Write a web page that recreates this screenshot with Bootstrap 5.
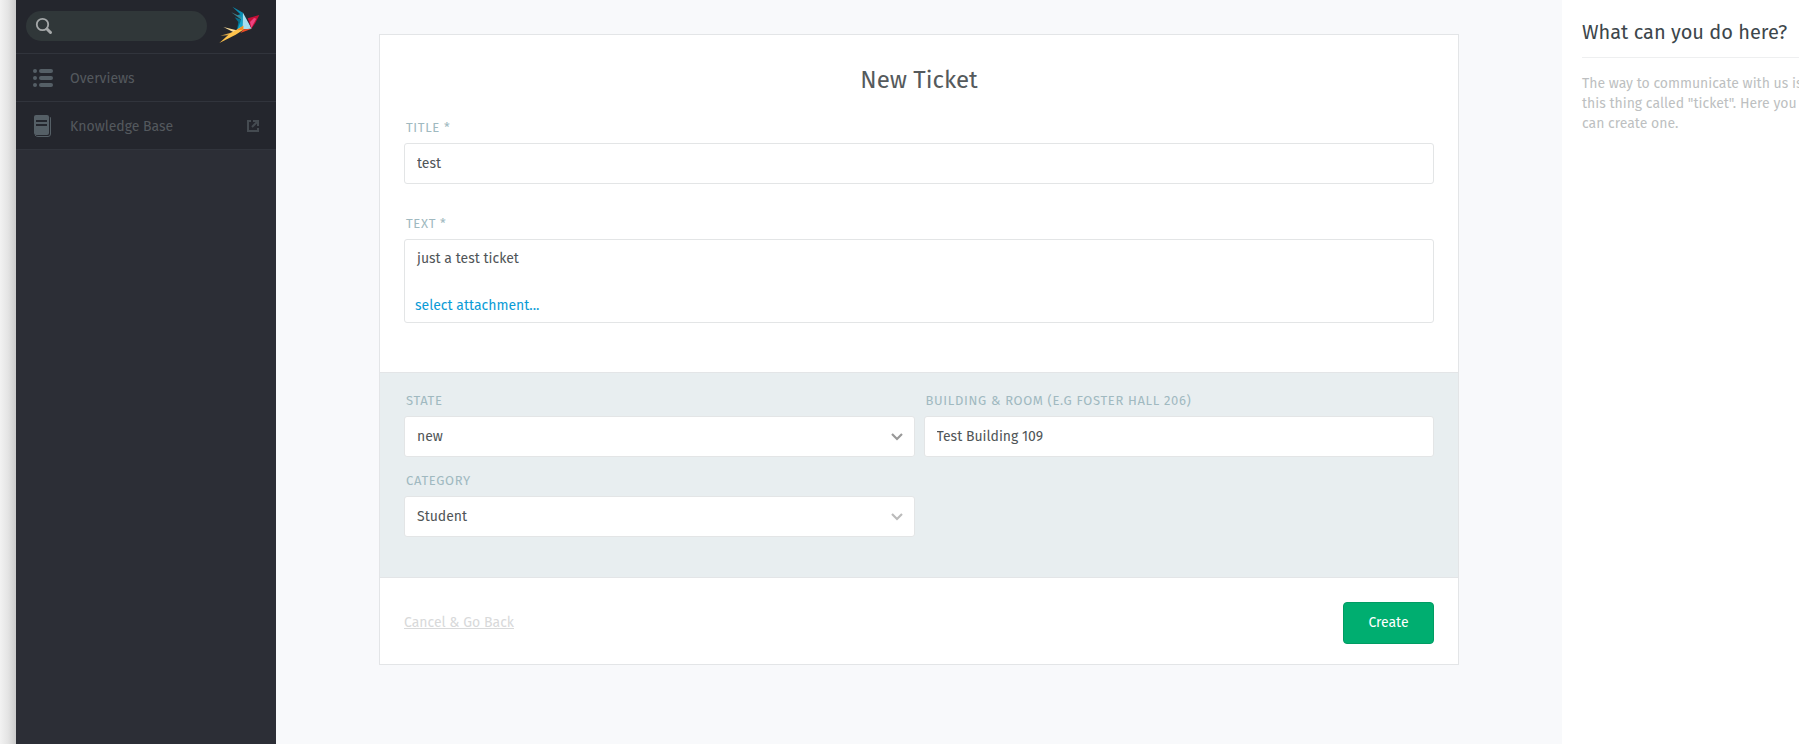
<!DOCTYPE html>
<html lang="en">
<head>
<meta charset="utf-8">
<meta name="viewport" content="width=device-width, initial-scale=1">
<title>New Ticket</title>
<link href="https://cdn.jsdelivr.net/npm/bootstrap@5.3.0/dist/css/bootstrap.min.css" rel="stylesheet">
<style>
body { font-family: "Fira Sans", "Noto Sans", sans-serif; font-size: 14px; line-height: 20px; color: #505557; background: #f8f9fb; }
.window-edge { width: 16px; background: linear-gradient(90deg, #f2f2f2, #e4e4e4 50%, #cbcbcb); }
.side-menu { width: 260px; background: #2c2e36; }
.side-top { background: #24262d; }
.search-row { height: 53px; padding: 0 11px 8px 10px; align-items: flex-end; }
.search-pill { width: 181px; height: 30px; border-radius: 15px; background: #303739; padding: 0 12px 0 9px; }
.search-pill input { background: none; border: 0; outline: 0; color: #ccc; min-width: 0; }
.menu-link { height: 48px; border-top: 1px solid #31343c; padding: 1px 17px 0 16px; color: #54595e; text-decoration: none; }
.menu-link span { padding-top: 2px; }
.menu-link .menu-icon { width: 22px; margin-right: 16px; }
.side-end { border-top: 1px solid #31343c; }
.ticket-wrap { padding: 34px 24px; }
.ticket { max-width: 1080px; border: 1px solid #e3e5e7; background: #fff; }
.ticket h1 { font-size: 24px; line-height: 32px; font-weight: 400; color: #555a5c; }
.ticket-main { padding: 29px 24px 49px; }
.ticket label { display: block; font-size: 13px; line-height: 16px; letter-spacing: .05em; text-transform: uppercase; color: #a0b9c0; margin: 0 0 7px 2px; }
.field { height: 41px; padding: 0 12px; border: 1px solid #e3e5e6; border-radius: 3px; font-size: 14px; line-height: 20px; color: #505557; background-color: #fff; }
.composer { border: 1px solid #e3e5e6; border-radius: 3px; padding: 9px 10px 5px; }
.composer textarea { resize: none; border: 0; outline: 0; height: 46px; padding: 0 2px; color: #505557; }
.attach { border: 0; background: none; color: #0a9bd6; line-height: 22px; }
.ticket-meta { background: #e8eef0; border-top: 1px solid #e3e5e7; border-bottom: 1px solid #e3e5e7; padding: 20px 24px 40px; }
.meta-grid { display: grid; grid-template-columns: 1fr 1fr; gap: 16px 9px; }
.pick select { appearance: none; }
.pick svg { right: 12px; top: 17px; pointer-events: none; }
.ticket-foot { padding: 24px 24px 20px; }
.cancel { color: #d8d9da; }
.btn-create { width: 91px; height: 42px; font-size: 14px; color: #fff; background: #00ae70; border: 1px solid #009c63; border-radius: 4px; }
.help { width: 237px; background: #fff; }
.help-body { width: 280px; padding: 16px 20px; color: #bdbfc1; }
.help h2 { font-size: 20px; line-height: 32px; font-weight: 400; color: #3d464b; padding-bottom: 9px; border-bottom: 1px solid #eeeff0; margin-bottom: 16px; }
</style>
</head>
<body>
<div class="d-flex min-vh-100">
  <div class="window-edge flex-shrink-0"></div>
  <aside class="side-menu flex-shrink-0">
    <div class="side-top">
      <div class="search-row d-flex justify-content-between">
        <div class="search-pill d-flex align-items-center mb-1">
          <svg class="flex-shrink-0" width="18" height="18" viewBox="0 0 18 18" fill="none" stroke="#a5a8a9"><circle cx="7.500" cy="7.500" r="5.700" stroke-width="1.800"/><path d="M12 12l3.500 3.500" stroke-width="3" stroke-linecap="round"/></svg>
          <input type="search" class="flex-grow-1" aria-label="Search">
        </div>
        <svg class="me-1 flex-shrink-0" width="43" height="40" viewBox="655 15 129 120" aria-label="Logo">
          <path fill="#0a8fb5" d="M698 20L730 38 728 62 712 46 722 43z"/>
          <path fill="#3b8794" d="M695 37L727 52 727 61z"/>
          <path fill="#056f8d" d="M705 52L728 60 712 90 716 66z"/>
          <path fill="#13a4c9" d="M729 38L730 78 711 92 722 66z"/>
          <path fill="#a5dff1" d="M730 38L756 86 729 88z"/>
          <path fill="#c50f35" d="M744 55L779 45 767 69 755 86z"/>
          <path fill="#ef4280" d="M763 54L770 56 755 84 751 66z"/>
          <path fill="#ef4a26" d="M732 88L756 86 722 99z"/>
          <path fill="#f9dc9a" d="M671 81L711 91 702 97z"/>
          <path fill="#d5a349" d="M662 107L703 95 694 105z"/>
          <path fill="#ffc34c" d="M659 129L690 101 731 77 731 89 708 104z"/>
          <path fill="#f58b20" d="M711 91L731 77 731 89z"/>
        </svg>
      </div>
      <nav>
        <a href="#" class="menu-link d-flex align-items-center">
          <svg class="menu-icon" width="22" height="20" viewBox="0 0 22 20" fill="#555f66"><circle cx="3" cy="3" r="2"/><circle cx="3" cy="10" r="2"/><circle cx="3" cy="17" r="2"/><rect x="7" y="1" width="14" height="4" rx="2"/><rect x="7" y="8" width="14" height="4" rx="2"/><rect x="7" y="15" width="14" height="4" rx="2"/></svg>
          <span>Overviews</span>
        </a>
        <a href="#" class="menu-link d-flex align-items-center">
          <svg class="menu-icon" width="22" height="22" viewBox="0 0 22 22"><path fill="#555f66" d="M4 0h11a2 2 0 0 1 2 2v16a2 2 0 0 1-2 2H4a2 2 0 0 1-2-2V2a2 2 0 0 1 2-2z"/><path fill="none" stroke="#555f66" d="M18 2q.5 0 .5 2v15q0 2.500-2.500 2.500H6q-2 0-3-1.500"/><path stroke="#24262d" stroke-width="2" d="M4 6h11M4 10h11"/></svg>
          <span>Knowledge Base</span>
          <svg class="ms-auto" width="12" height="12" viewBox="0 0 12 12" fill="none" stroke="#454b51" stroke-width="2"><path d="M4 1H1v10h10V8M6 1h5v5M11 1L5 7"/></svg>
        </a>
      </nav>
    </div>
    <div class="side-end"></div>
  </aside>
  <main class="ticket-wrap flex-grow-1">
    <form class="ticket mx-auto">
      <div class="ticket-main">
        <h1 class="text-center mb-4">New Ticket</h1>
        <div class="mb-4 pb-2">
          <label for="title">Title *</label>
          <input id="title" class="field d-block w-100" type="text" value="test">
        </div>
        <div>
          <label for="text">Text *</label>
          <div class="composer">
            <textarea id="text" class="d-block w-100">just a test ticket</textarea>
            <button type="button" class="attach d-block p-0">select attachment...</button>
          </div>
        </div>
      </div>
      <div class="ticket-meta">
        <div class="meta-grid">
          <div>
            <label for="state">State</label>
            <div class="pick position-relative">
              <select id="state" class="field d-block w-100"><option>new</option></select>
              <svg class="position-absolute" width="12" height="8" viewBox="0 0 12 8" fill="none" stroke="#999" stroke-width="2.200"><path d="M1 1l5 5 5-5"/></svg>
            </div>
          </div>
          <div>
            <label for="room">Building &amp; Room (e.g Foster Hall 206)</label>
            <input id="room" class="field d-block w-100" type="text" value="Test Building 109">
          </div>
          <div>
            <label for="category">Category</label>
            <div class="pick position-relative">
              <select id="category" class="field d-block w-100"><option>Student</option></select>
              <svg class="position-absolute" width="12" height="8" viewBox="0 0 12 8" fill="none" stroke="#bbb" stroke-width="2.200"><path d="M1 1l5 5 5-5"/></svg>
            </div>
          </div>
        </div>
      </div>
      <div class="ticket-foot d-flex justify-content-between align-items-center">
        <a href="#" class="cancel">Cancel &amp; Go Back</a>
        <button type="submit" class="btn-create">Create</button>
      </div>
    </form>
  </main>
  <aside class="help flex-shrink-0 overflow-hidden">
    <div class="help-body">
      <h2>What can you do here?</h2>
      <p class="mb-0">The way to communicate with us is this thing called "ticket". Here you can create one.</p>
    </div>
  </aside>
</div>
<script src="https://cdn.jsdelivr.net/npm/bootstrap@5.3.0/dist/js/bootstrap.bundle.min.js"></script>
</body>
</html>
